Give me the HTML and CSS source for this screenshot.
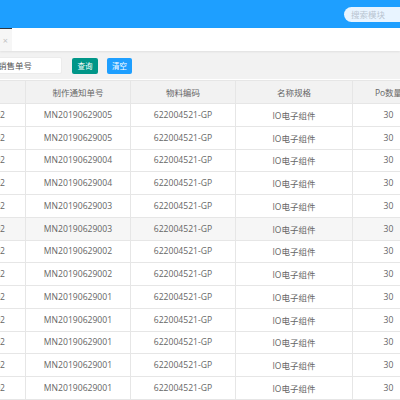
FILE: index.html
```html
<!DOCTYPE html>
<html lang="zh">
<head>
<meta charset="utf-8">
<link rel="stylesheet" href="styles.css">
</head>
<body>
<div class="header">
  <div class="search">搜索模块</div>
</div>
<div class="tabs">
  <div class="tab"><span class="close">×</span></div>
</div>
<div class="toolbar">
  <div class="input">销售单号</div>
  <button class="btn btn-query">查询</button>
  <button class="btn btn-clear">清空</button>
</div>
<div class="table-wrap">
  <table class="grid">
    <colgroup>
      <col class="c0"><col class="c1"><col class="c2"><col class="c3"><col class="c4">
    </colgroup>
    <thead>
      <tr><th>单号</th><th>制作通知单号</th><th>物料编码</th><th>名称规格</th><th>Po数量</th></tr>
    </thead>
    <tbody>
      <tr><td>XS0629002</td><td>MN20190629005</td><td>622004521-GP</td><td>IO电子组件</td><td>30</td></tr>
      <tr><td>XS0629002</td><td>MN20190629005</td><td>622004521-GP</td><td>IO电子组件</td><td>30</td></tr>
      <tr><td>XS0629002</td><td>MN20190629004</td><td>622004521-GP</td><td>IO电子组件</td><td>30</td></tr>
      <tr><td>XS0629002</td><td>MN20190629004</td><td>622004521-GP</td><td>IO电子组件</td><td>30</td></tr>
      <tr><td>XS0629002</td><td>MN20190629003</td><td>622004521-GP</td><td>IO电子组件</td><td>30</td></tr>
      <tr class="hover"><td>XS0629002</td><td>MN20190629003</td><td>622004521-GP</td><td>IO电子组件</td><td>30</td></tr>
      <tr><td>XS0629002</td><td>MN20190629002</td><td>622004521-GP</td><td>IO电子组件</td><td>30</td></tr>
      <tr><td>XS0629002</td><td>MN20190629002</td><td>622004521-GP</td><td>IO电子组件</td><td>30</td></tr>
      <tr><td>XS0629002</td><td>MN20190629001</td><td>622004521-GP</td><td>IO电子组件</td><td>30</td></tr>
      <tr><td>XS0629002</td><td>MN20190629001</td><td>622004521-GP</td><td>IO电子组件</td><td>30</td></tr>
      <tr><td>XS0629002</td><td>MN20190629001</td><td>622004521-GP</td><td>IO电子组件</td><td>30</td></tr>
      <tr><td>XS0629002</td><td>MN20190629001</td><td>622004521-GP</td><td>IO电子组件</td><td>30</td></tr>
      <tr><td>XS0629002</td><td>MN20190629001</td><td>622004521-GP</td><td>IO电子组件</td><td>30</td></tr>
    </tbody>
  </table>
</div>
</body>
</html>
```
FILE: styles.css
```css
html, body {
  margin: 0;
  padding: 0;
  width: 400px;
  height: 400px;
  overflow: hidden;
  background: #ffffff;
  font-family: "Open Sans", "Noto Sans CJK SC", sans-serif;
  color: #666666;
}

.header {
  height: 28px;
  background: #1e9fff;
  display: flex;
  justify-content: flex-end;
  align-items: center;
}

.search {
  width: 60px;
  height: 15px;
  margin-right: -4px;
  margin-top: 1px;
  background: #e8f4ff;
  border-radius: 8px 0 0 8px;
  color: #b8c4d0;
  font-size: 8.5px;
  line-height: 15px;
  padding-left: 7px;
  box-sizing: border-box;
}

.tabs {
  height: 23px;
  background: #ffffff;
  display: flex;
  box-shadow: 0 1px 2px rgba(0,0,0,0.08);
  position: relative;
}

.tab {
  width: 12px;
  height: 23px;
  box-sizing: border-box;
  border-top: 1px solid #2f3740;
  background: #f6f6f6;
  display: flex;
  align-items: center;
  justify-content: flex-end;
  overflow: hidden;
}

.close {
  font-size: 9px;
  color: #c2c2c2;
  margin-right: 4px;
  margin-top: 1px;
}

.toolbar {
  height: 28px;
  background: #f2f2f2;
  display: flex;
  align-items: center;
  padding-top: 1px;
  box-sizing: border-box;
}

.input {
  width: 66px;
  height: 17px;
  margin-left: -4px;
  background: #ffffff;
  border: 1px solid #ececec;
  border-radius: 2px;
  box-sizing: border-box;
  font-size: 8.5px;
  line-height: 15px;
  color: #555555;
  padding-left: 1px;
}

.btn {
  height: 16px;
  border: none;
  border-radius: 2px;
  color: #ffffff;
  font-family: "Noto Sans CJK SC", sans-serif;
  font-size: 7.5px;
  line-height: 16px;
  margin-left: 10px;
}

.btn-query {
  background: #009688;
  width: 26px;
  padding: 0;
}

.btn-clear {
  background: #1e9fff;
  width: 25px;
  padding: 0;
  margin-left: 9px;
}

.table-wrap {
  background: #ffffff;
  padding-top: 1px;
  margin-left: -60px;
}

.grid {
  border-collapse: collapse;
  table-layout: fixed;
  width: 484px;
  font-size: 8.6px;
}

.c0 { width: 85px; }
.c1 { width: 105px; }
.c2 { width: 105px; }
.c3 { width: 117px; }
.c4 { width: 72px; }

.grid th {
  height: 22px;
  background: #f2f2f2;
  font-weight: normal;
  font-size: 8.5px;
  color: #666666;
  border: 1px solid #e6e6e6;
  padding: 0;
  white-space: nowrap;
  overflow: hidden;
}

.grid td {
  height: 21.75px;
  border: 1px solid #e6e6e6;
  text-align: center;
  padding: 0;
  white-space: nowrap;
  overflow: hidden;
  color: #666666;
}

.grid td:nth-child(4) {
  font-size: 8.5px;
}

.grid tr.hover td {
  background: #f6f6f6;
}
```
